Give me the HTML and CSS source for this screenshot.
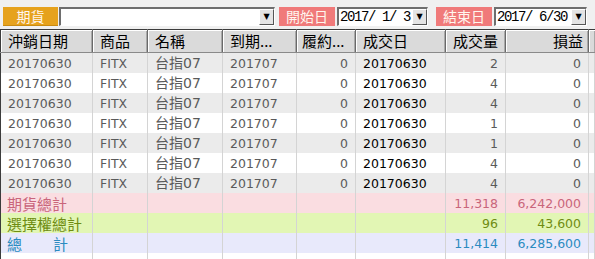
FILE: index.html
```html
<!DOCTYPE html>
<html>
<head>
  <title>沖銷明細</title>
  <link rel="stylesheet" href="styles.css">
</head>
<body>
  <div class="toolbar">
    <div class="tag tag-futures">期貨</div>
    <div class="combo combo-product">
      <span class="combo-text"></span>
      <span class="combo-btn">&#9660;</span>
    </div>
    <div class="tag tag-date">開始日</div>
    <div class="combo combo-date">
      <span class="combo-text">2017/ 1/ 3</span>
      <span class="combo-btn">&#9660;</span>
    </div>
    <div class="tag tag-date tag-end">結束日</div>
    <div class="combo combo-date combo-date-end">
      <span class="combo-text">2017/ 6/30</span>
      <span class="combo-btn">&#9660;</span>
    </div>
  </div>

  <table class="grid">
    <colgroup>
      <col style="width:92px">
      <col style="width:55px">
      <col style="width:75px">
      <col style="width:74px">
      <col style="width:59px">
      <col style="width:90px">
      <col style="width:60px">
      <col style="width:83px">
      <col>
    </colgroup>
    <thead>
      <tr>
        <th>沖銷日期</th>
        <th>商品</th>
        <th>名稱</th>
        <th>到期...</th>
        <th class="tight">履約...</th>
        <th>成交日</th>
        <th>成交量</th>
        <th class="num">損益</th>
        <th class="filler"></th>
      </tr>
    </thead>
    <tbody>
      <tr class="odd">
        <td>20170630</td><td>FITX</td><td class="cjk">台指07</td><td>201707</td>
        <td class="num">0</td><td class="dark">20170630</td><td class="num">2</td><td class="num">0</td><td></td>
      </tr>
      <tr>
        <td>20170630</td><td>FITX</td><td class="cjk">台指07</td><td>201707</td>
        <td class="num">0</td><td class="dark">20170630</td><td class="num">4</td><td class="num">0</td><td></td>
      </tr>
      <tr class="odd">
        <td>20170630</td><td>FITX</td><td class="cjk">台指07</td><td>201707</td>
        <td class="num">0</td><td class="dark">20170630</td><td class="num">4</td><td class="num">0</td><td></td>
      </tr>
      <tr>
        <td>20170630</td><td>FITX</td><td class="cjk">台指07</td><td>201707</td>
        <td class="num">0</td><td class="dark">20170630</td><td class="num">1</td><td class="num">0</td><td></td>
      </tr>
      <tr class="odd">
        <td>20170630</td><td>FITX</td><td class="cjk">台指07</td><td>201707</td>
        <td class="num">0</td><td class="dark">20170630</td><td class="num">1</td><td class="num">0</td><td></td>
      </tr>
      <tr>
        <td>20170630</td><td>FITX</td><td class="cjk">台指07</td><td>201707</td>
        <td class="num">0</td><td class="dark">20170630</td><td class="num">4</td><td class="num">0</td><td></td>
      </tr>
      <tr class="odd">
        <td>20170630</td><td>FITX</td><td class="cjk">台指07</td><td>201707</td>
        <td class="num">0</td><td class="dark">20170630</td><td class="num">4</td><td class="num">0</td><td></td>
      </tr>
      <tr class="total total-futures">
        <td class="cjk">期貨總計</td><td></td><td></td><td></td>
        <td></td><td></td><td class="num">11,318</td><td class="num">6,242,000</td><td></td>
      </tr>
      <tr class="total total-options">
        <td class="cjk">選擇權總計</td><td></td><td></td><td></td>
        <td></td><td></td><td class="num">96</td><td class="num">43,600</td><td></td>
      </tr>
      <tr class="total total-all">
        <td class="cjk"><span class="spread">總</span>計</td><td></td><td></td><td></td>
        <td></td><td></td><td class="num">11,414</td><td class="num">6,285,600</td><td></td>
      </tr>
      <tr class="blank">
        <td></td><td></td><td></td><td></td><td></td><td></td><td></td><td></td><td></td>
      </tr>
    </tbody>
  </table>
</body>
</html>
```

FILE: styles.css
```css
body {
  margin: 0;
  background-color: #f0f0f0;
  font-family: "DejaVu Sans", Verdana, "Noto Sans CJK TC", sans-serif;
  font-size: 12.5px;
  overflow: hidden;
}

.toolbar {
  display: flex;
  align-items: center;
  padding: 7px 0 0 3px;
  height: 19px;
}

.tag {
  height: 19px;
  line-height: 19px;
  text-align: center;
  color: #fff6ee;
  font-family: "Noto Sans CJK TC", sans-serif;
  font-size: 14px;
  box-sizing: border-box;
}

.tag-futures {
  width: 55px;
  background-color: #e6a21d;
  border-bottom: 1px solid #c98a10;
  margin-right: 1px;
}

.tag-date {
  width: 56px;
  background-color: #f07a7a;
  margin-left: 4px;
  margin-right: 2px;
}

.tag-end {
  margin-left: 8px;
}

.combo {
  display: flex;
  height: 19px;
  box-sizing: border-box;
  background-color: #fff;
  border-top: 2px solid #6e6e6e;
  border-left: 2px solid #6e6e6e;
  border-right: 1px solid #ffffff;
  border-bottom: 1px solid #ffffff;
}

.combo-product {
  width: 216px;
}

.combo-date {
  width: 91px;
}

.combo-date-end {
  width: 93px;
}

.combo-text {
  flex: 1;
  font-family: "Liberation Mono", monospace;
  font-size: 14px;
  letter-spacing: -1.4px;
  line-height: 16px;
  padding-left: 1px;
  color: #000;
  white-space: pre;
  overflow: hidden;
}

.combo-btn {
  width: 15px;
  box-sizing: border-box;
  background-color: #e4e4e4;
  border-top: 1px solid #ffffff;
  border-left: 1px solid #ffffff;
  border-right: 1px solid #555;
  border-bottom: 1px solid #555;
  font-size: 8px;
  line-height: 14px;
  text-align: center;
  color: #000;
}

.grid {
  margin-top: 3px;
  width: 595px;
  table-layout: fixed;
  border-collapse: collapse;
  border-top: 1px solid #3c3c3c;
  border-left: 1px solid #3c3c3c;
}

.grid th {
  height: 22px;
  padding: 0 3px 0 7px;
  background-color: #dadada;
  font-family: "Noto Sans CJK TC", sans-serif;
  font-size: 15px;
  font-weight: normal;
  line-height: 16px;
  text-align: left;
  color: #000;
  white-space: nowrap;
  overflow: hidden;
  border-right: 1px solid #6a6a6a;
  border-bottom: 1px solid #8a8a8a;
  box-shadow: inset 1px 1px 0 #ffffff, inset -1px 0 0 #a8a8a8;
}

.grid th.tight {
  padding: 0 1px 0 5px;
}

.grid th.num {
  text-align: right;
  padding-right: 5px;
}

.grid th.filler {
  border-right: none;
}

.grid td {
  height: 20px;
  padding: 0 7px;
  line-height: 15px;
  color: #5a5a5a;
  white-space: nowrap;
  overflow: hidden;
  border-right: 1px solid #d4d4d4;
  background-color: #ffffff;
}

.grid tr.odd td {
  background-color: #ebebeb;
}

.grid td.num {
  text-align: right;
}

.grid td.dark {
  color: #000;
}

.grid td.cjk {
  font-family: "DejaVu Sans", "Noto Sans CJK TC", sans-serif;
  font-size: 14px;
}

.grid tr.total td.cjk {
  font-family: "Noto Sans CJK TC", sans-serif;
  font-size: 15px;
  padding-left: 6px;
}

.grid .total-futures td {
  background-color: #fadde1;
  color: #c9657b;
}

.grid .total-options td {
  background-color: #e2f6b4;
  color: #6f8c12;
}

.grid .total-all td {
  background-color: #e8e9fb;
  color: #2b8bc0;
}

.spread {
  display: inline-block;
  width: 46px;
}

.grid tr.blank td {
  height: 8px;
}
```
